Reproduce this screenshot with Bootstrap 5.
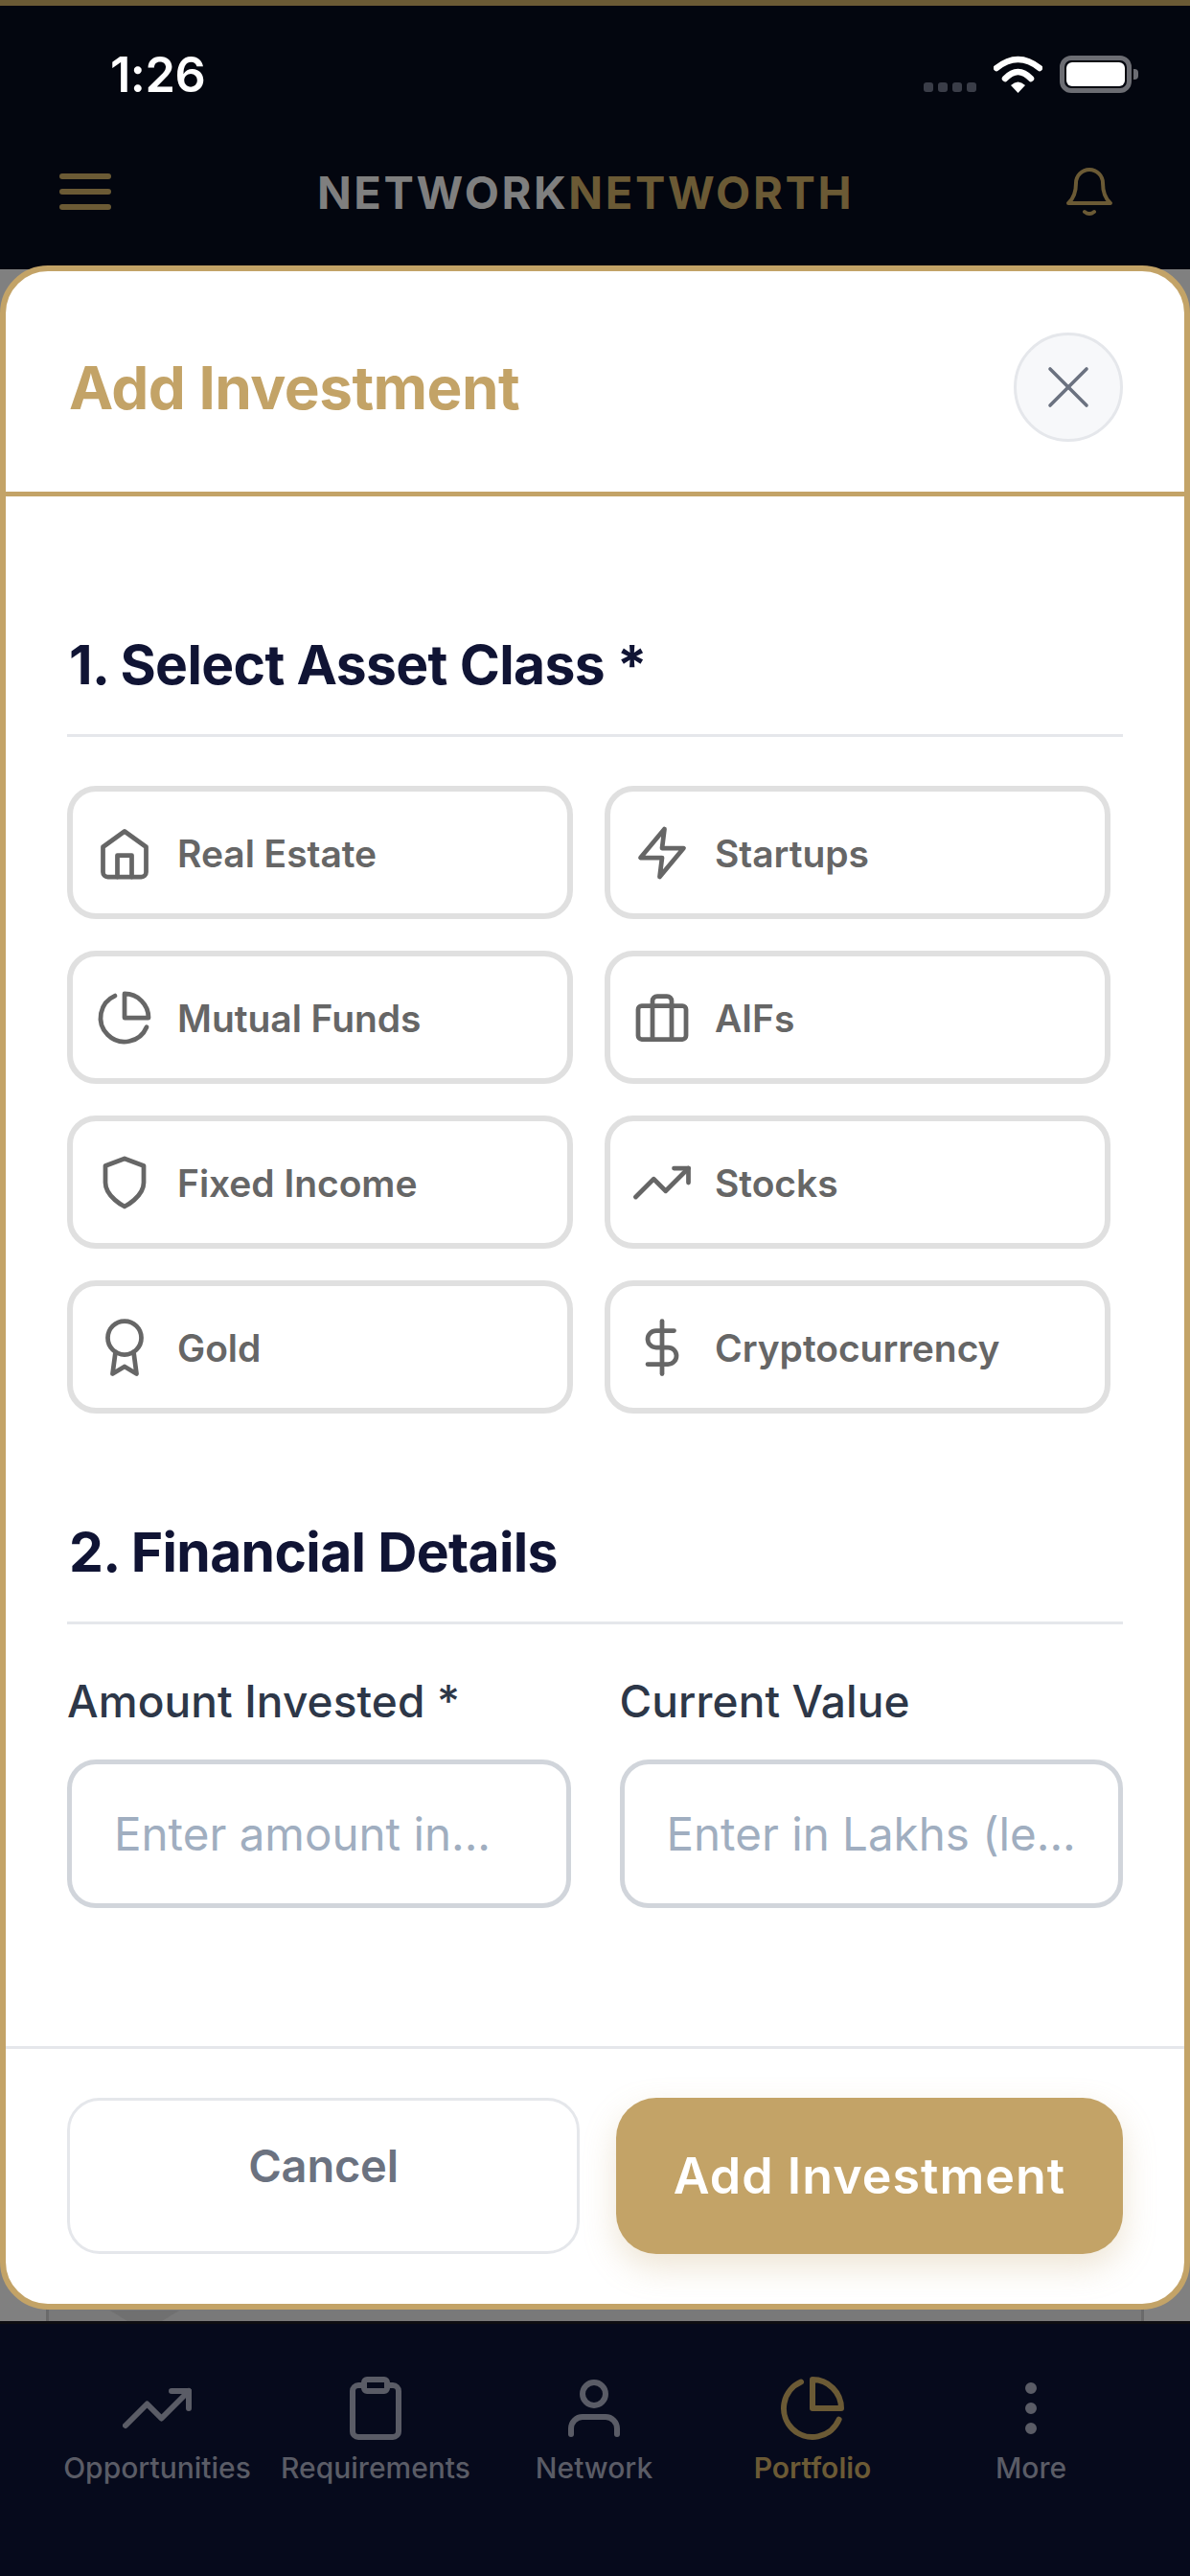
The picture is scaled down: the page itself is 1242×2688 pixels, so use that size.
<!DOCTYPE html>
<html lang="en">
<head>
    <meta charset="UTF-8">
    <meta name="viewport" content="width=device-width, initial-scale=1.0">
    <title>Add Investment</title>
    <link href="https://cdn.jsdelivr.net/npm/bootstrap@5.3.3/dist/css/bootstrap.min.css" rel="stylesheet">
    <style>
        body {
            background: #808080;
            font-family: "Inter", "Liberation Sans", sans-serif;
        }
        .app-shell { position: relative; width: 1242px; height: 2688px; overflow: hidden; }
        svg.ico { fill: none; stroke: currentColor; stroke-linecap: round; stroke-linejoin: round; flex-shrink: 0; }

        /* dimmed app chrome behind the sheet */
        .top-chrome { background: #03060f; border-top: 6px solid #6b5a35; height: 281px; flex-shrink: 0; }
        .status-row { height: 144px; padding: 0 61px 0 115px; }
        .status-time { color: #fff; font-size: 50.5px; font-weight: 600; letter-spacing: -.5px; padding-top: 47px; line-height: 1; }
        .status-icons { padding-top: 52px; gap: 18px; }
        .signal-dots { gap: 5px; padding-top: 28px; }
        .signal-dots i { display: block; width: 10px; height: 10px; border-radius: 3px; background: #3a3d48; }
        .batt { width: 75px; height: 39px; border: 5px solid #6c6d73; border-radius: 12px; padding: 2px; position: relative; }
        .batt b { display: block; height: 100%; background: #fff; border-radius: 6px; }
        .batt::after { content: ""; position: absolute; right: -12px; top: 9px; width: 5px; height: 11px; background: #6c6d73; border-radius: 0 4px 4px 0; }
        .nav-row { padding: 0 80px 0 62px; height: 100px; }
        .menu-bars { width: 54px; gap: 10px; }
        .menu-bars i { display: block; height: 6px; border-radius: 3px; background: #6b5a35; }
        .brand-text { font-size: 47px; font-weight: 700; letter-spacing: 2.6px; color: #7f7f7f; line-height: 1; margin-right: 6px; }
        .brand-text span { color: #6b5a35; }
        .bell-ico { color: #6b5a35; width: 50px; height: 54px; }

        /* the page under the sheet only shows as a thin strip at its foot */
        .middle-fill { background: #808080; padding: 0 48px; }
        .under-page { position: relative; background: #797979; border-left: 3px solid #6a6a6a; border-right: 3px solid #6a6a6a; }
        .under-notch { position: absolute; left: 64px; bottom: 0; width: 72px; height: 11px; background: #707070; clip-path: polygon(0 0, 100% 0, 75% 100%, 25% 100%); }

        .tab-strip { background: #060a1c; height: 266px; flex-shrink: 0; padding: 52px 50px 0; border-top: 3px solid #0e0e12; }
        .tab-cell { width: 228px; color: #5a5c66; font-size: 30px; font-weight: 500; }
        .tab-cell svg { width: 72px; height: 72px; stroke-width: 2; margin-bottom: 4px; }
        .tab-on { color: #6b5a35; font-weight: 600; }

        /* bottom sheet */
        .sheet {
            position: absolute; left: 0; right: 0; top: 277px; height: 2133px;
            background: #fff; border: 6px solid #c3a367; border-radius: 50px;
        }
        .sheet-head { height: 235px; padding: 12px 64px 0 64px; border-bottom: 5px solid #c3a367; flex-shrink: 0; }
        .sheet-title { color: #c3a367; font-size: 62px; font-weight: 700; margin: 0; letter-spacing: -.55px; padding: 3px 0 0 2px; }
        .close-round { width: 114px; height: 114px; border-radius: 50%; background: #f7f8fa; border: 3px solid #e5e7eb; color: #6b7280; padding: 0; }
        .close-round svg { width: 48px; height: 48px; stroke-width: 3.6; }
        .sheet-main { padding: 0 64px; }
        .step-head { color: #101434; font-size: 57px; font-weight: 700; letter-spacing: -.65px; line-height: 1; margin: 0; padding: 0 0 44px 2px; border-bottom: 3px solid #e5e7eb; }
        .first-step { margin-top: 147px; }
        .second-step { margin-top: 116px; }
        .chip-grid { display: grid; grid-template-columns: 528px 528px; gap: 33px; margin-top: 51px; }
        .chip-item {
            height: 139px; border: 6px solid #e0e0e0; border-radius: 30px; background: #fff;
            padding: 3px 0 0 24px; gap: 25px; color: #666; font-size: 39px; font-weight: 600; letter-spacing: -.05px;
        }
        .chip-item svg { width: 60px; height: 60px; stroke-width: 1.9; margin-top: -2px; }
        .field-row { --bs-gutter-x: 51px; margin-top: 53px; }
        .field-name { color: #2d3748; font-size: 46px; font-weight: 500; letter-spacing: .1px; line-height: 1.2; margin-bottom: 33px; display: block; }
        .amount-box.form-control {
            height: 155px; border: 5px solid #d1d5db; border-radius: 30px; font-size: 47.5px; padding: 0 44px;
            font-family: inherit; color: #2d3748;
        }
        .amount-box.form-control::placeholder { color: #a0aec0; opacity: 1; }
        .sheet-foot { border-top: 3px solid #e5e7eb; padding: 51px 64px; gap: 38px; flex-shrink: 0; height: 269px; }
        .btn-cancel.btn {
            flex: 1; height: 163px; border: 3px solid #e5e7eb; border-radius: 34px; background: #fff;
            color: #6b7280; font-size: 47px; font-weight: 600; padding: 0 0 20px; letter-spacing: -.2px;
        }
        .btn-add.btn {
            flex: 1; height: 163px; border: 0; border-radius: 42px; background: #c3a367; color: #fff;
            font-size: 52px; font-weight: 600; letter-spacing: 1px; padding: 0;
            box-shadow: 0 14px 34px rgba(195, 163, 103, .28);
        }
    </style>
</head>
<body>
<div class="app-shell d-flex flex-column">
    <header class="top-chrome">
        <div class="status-row d-flex justify-content-between align-items-start">
            <div class="status-time">1:26</div>
            <div class="status-icons d-flex align-items-start">
                <div class="signal-dots d-flex"><i></i><i></i><i></i><i></i></div>
                <svg width="51" height="39" viewBox="0 0 51 39">
                    <path d="M3 13Q25.5-5 48 13" fill="none" stroke="#fff" stroke-width="6.5" stroke-linecap="round"/>
                    <path d="M12 24Q25.5 10 39 24" fill="none" stroke="#fff" stroke-width="6.5" stroke-linecap="round"/>
                    <path d="M18 31Q25.5 24 33 31L25.5 39z" fill="#fff"/>
                </svg>
                <div class="batt"><b></b></div>
            </div>
        </div>
        <div class="nav-row d-flex justify-content-between align-items-center">
            <div class="menu-bars d-flex flex-column"><i></i><i></i><i></i></div>
            <div class="brand-text">NETWORK<span>NETWORTH</span></div>
            <svg class="ico bell-ico" viewBox="0 0 50 54" stroke-width="4">
                <path d="M3 39C10 33 11 25 11 18a14 14 0 0 1 28 0C39 25 40 33 47 39z"/>
                <path d="M20 48q5 4 10 0"/>
            </svg>
        </div>
    </header>

    <div class="middle-fill flex-grow-1 d-flex">
        <div class="under-page flex-grow-1"><div class="under-notch"></div></div>
    </div>

    <nav class="tab-strip d-flex">
        <div class="tab-cell d-flex flex-column align-items-center">
            <svg class="ico" viewBox="0 0 24 24"><polyline points="23 6 13.5 15.5 8.5 10.5 1 18"/><polyline points="17 6 23 6 23 12"/></svg>
            <span>Opportunities</span>
        </div>
        <div class="tab-cell d-flex flex-column align-items-center">
            <svg class="ico" viewBox="0 0 24 24"><path d="M16 4h2a2 2 0 0 1 2 2v14a2 2 0 0 1-2 2H6a2 2 0 0 1-2-2V6a2 2 0 0 1 2-2h2"/><rect x="8" y="2" width="8" height="4" rx="1"/></svg>
            <span>Requirements</span>
        </div>
        <div class="tab-cell d-flex flex-column align-items-center">
            <svg class="ico" viewBox="0 0 24 24"><path d="M20 21v-2a4 4 0 0 0-4-4H8a4 4 0 0 0-4 4v2"/><circle cx="12" cy="7" r="4"/></svg>
            <span>Network</span>
        </div>
        <div class="tab-cell tab-on d-flex flex-column align-items-center">
            <svg class="ico" viewBox="0 0 24 24"><path d="M21.21 15.89A10 10 0 1 1 8 2.83"/><path d="M22 12A10 10 0 0 0 12 2v10z"/></svg>
            <span>Portfolio</span>
        </div>
        <div class="tab-cell d-flex flex-column align-items-center">
            <svg class="ico" viewBox="0 0 24 24"><circle cx="12" cy="5" r="1"/><circle cx="12" cy="12" r="1"/><circle cx="12" cy="19" r="1"/></svg>
            <span>More</span>
        </div>
    </nav>

    <section class="sheet d-flex flex-column">
        <div class="sheet-head d-flex justify-content-between align-items-center">
            <h2 class="sheet-title">Add Investment</h2>
            <button type="button" class="close-round btn d-flex align-items-center justify-content-center">
                <svg class="ico" viewBox="0 0 48 48"><line x1="5" y1="5" x2="43" y2="43"/><line x1="43" y1="5" x2="5" y2="43"/></svg>
            </button>
        </div>

        <div class="sheet-main flex-grow-1">
            <h3 class="step-head first-step">1. Select Asset Class *</h3>
            <div class="chip-grid">
                <div class="chip-item d-flex align-items-center">
                    <svg class="ico" viewBox="0 0 24 24"><path d="M3 9.5 12 3l9 6.5V20a2 2 0 0 1-2 2H5a2 2 0 0 1-2-2z"/><polyline points="9 22 9 13 15 13 15 22"/></svg>
                    <span>Real Estate</span>
                </div>
                <div class="chip-item d-flex align-items-center">
                    <svg class="ico" viewBox="0 0 24 24"><polygon points="13 2 3 14 12 14 11 22 21 10 12 10 13 2"/></svg>
                    <span>Startups</span>
                </div>
                <div class="chip-item d-flex align-items-center">
                    <svg class="ico" viewBox="0 0 24 24"><path d="M21.21 15.89A10 10 0 1 1 8 2.83"/><path d="M22 12A10 10 0 0 0 12 2v10z"/></svg>
                    <span>Mutual Funds</span>
                </div>
                <div class="chip-item d-flex align-items-center">
                    <svg class="ico" viewBox="0 0 24 24"><rect x="2" y="7" width="20" height="14" rx="1.5"/><path d="M16 21V5a2 2 0 0 0-2-2h-4a2 2 0 0 0-2 2v16"/></svg>
                    <span>AIFs</span>
                </div>
                <div class="chip-item d-flex align-items-center">
                    <svg class="ico" viewBox="0 0 24 24"><path d="M12 22s8-4 8-10V5l-8-3-8 3v7c0 6 8 10 8 10z"/></svg>
                    <span>Fixed Income</span>
                </div>
                <div class="chip-item d-flex align-items-center">
                    <svg class="ico" viewBox="0 0 24 24"><polyline points="23 6 13.5 15.5 8.5 10.5 1 18"/><polyline points="17 6 23 6 23 12"/></svg>
                    <span>Stocks</span>
                </div>
                <div class="chip-item d-flex align-items-center">
                    <svg class="ico" viewBox="0 0 24 24"><circle cx="12" cy="8" r="7"/><polyline points="8.21 13.89 7 23 12 20 17 23 15.79 13.88"/></svg>
                    <span>Gold</span>
                </div>
                <div class="chip-item d-flex align-items-center">
                    <svg class="ico" viewBox="0 0 24 24"><line x1="12" y1="1" x2="12" y2="23"/><path d="M17 5H9.5a3.5 3.5 0 0 0 0 7h5a3.5 3.5 0 0 1 0 7H6"/></svg>
                    <span>Cryptocurrency</span>
                </div>
            </div>

            <h3 class="step-head second-step">2. Financial Details</h3>
            <div class="row field-row">
                <div class="col-6">
                    <label class="field-name" for="amountInvested">Amount Invested *</label>
                    <input id="amountInvested" class="form-control amount-box" type="text" placeholder="Enter amount in...">
                </div>
                <div class="col-6">
                    <label class="field-name" for="currentValue">Current Value</label>
                    <input id="currentValue" class="form-control amount-box" type="text" placeholder="Enter in Lakhs (le...">
                </div>
            </div>
        </div>

        <div class="sheet-foot d-flex">
            <button type="button" class="btn btn-cancel">Cancel</button>
            <button type="button" class="btn btn-add">Add Investment</button>
        </div>
    </section>
</div>
<script src="https://cdn.jsdelivr.net/npm/bootstrap@5.3.3/dist/js/bootstrap.bundle.min.js"></script>
</body>
</html>
